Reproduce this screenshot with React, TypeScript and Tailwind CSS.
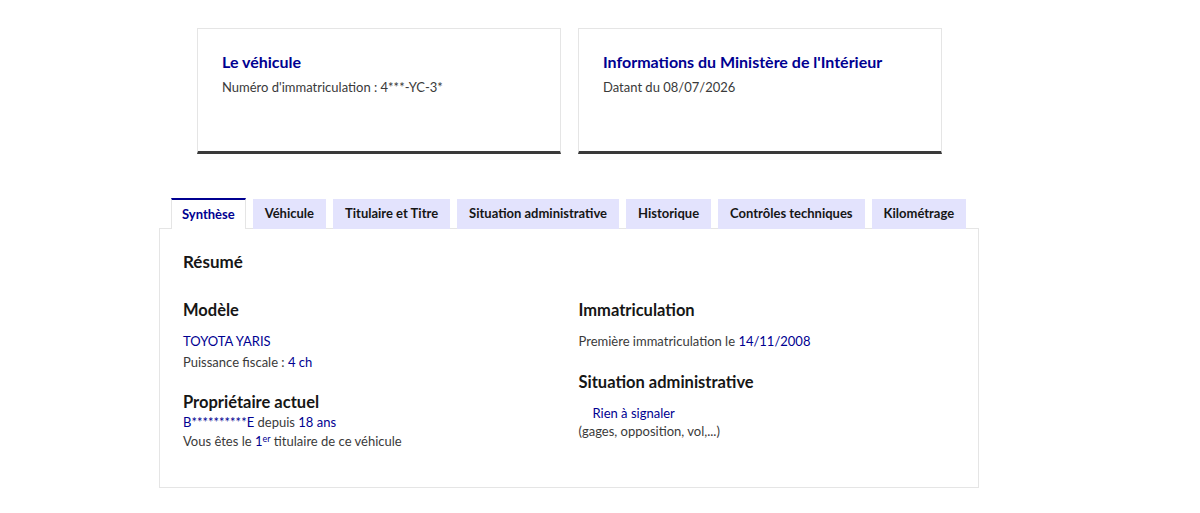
import React from "react";

const TABS = [
    "Synthèse",
    "Véhicule",
    "Titulaire et Titre",
    "Situation administrative",
    "Historique",
    "Contrôles techniques",
    "Kilométrage",
];

function InfoCard({ title, text }: { title: string; text: string }) {
    return (
        <div className="w-[364px] h-[126px] border border-[#e5e5e5] border-b-[3px] border-b-[#3a3a3a] px-6 pt-[21px]">
            <h2 className="text-[16px] leading-6 font-bold text-[#000091]">{title}</h2>
            <p className="mt-[3px] text-[13px] leading-5 text-[#3a3a3a]">{text}</p>
        </div>
    );
}

export default function App() {
    return (
        <div className="w-[1200px] h-[513px] bg-white font-['Lato',sans-serif] text-[#161616]">
            <div className="ml-[159px] w-[820px] pt-[28px]">
                <div className="flex gap-[17px] ml-[38px]">
                    <InfoCard title="Le véhicule" text="Numéro d'immatriculation : 4***-YC-3*" />
                    <InfoCard title="Informations du Ministère de l'Intérieur" text="Datant du 08/07/2026" />
                </div>

                <div className="mt-[44px] flex gap-[7px] pl-3 relative z-10">
                    {TABS.map((tab, i) =>
                        i === 0 ? (
                            <div
                                key={tab}
                                className="h-[31px] px-[10px] flex items-center bg-white border-t-2 border-t-[#000091] border-x border-x-[#e5e5e5] text-[13px] font-bold text-[#000091]"
                            >
                                {tab}
                            </div>
                        ) : (
                            <div
                                key={tab}
                                className="h-[30px] mt-[1px] px-3 flex items-center bg-[#e3e3fd] text-[13px] font-bold text-[#161616]"
                            >
                                {tab}
                            </div>
                        )
                    )}
                </div>

                <div className="h-[260px] -mt-[1px] border border-[#e5e5e5] pl-[23px] pr-6 pt-[21px]">
                    <h3 className="text-[17px] leading-6 font-bold">Résumé</h3>
                    <div className="mt-[24px] grid grid-cols-2 gap-5">
                        <div>
                            <h4 className="text-[16.5px] leading-6 font-bold">Modèle</h4>
                            <p className="mt-[9px] text-[13px] leading-5 text-[#000091]">TOYOTA YARIS</p>
                            <p className="mt-[1px] text-[13px] leading-5 text-[#3a3a3a]">
                                Puissance fiscale : <span className="text-[#000091]">4 ch</span>
                            </p>
                            <h4 className="mt-[18px] text-[16.5px] leading-6 font-bold">Propriétaire actuel</h4>
                            <p className="-mt-[1px] text-[13px] leading-[18px] text-[#000091]">
                                B**********E <span className="text-[#3a3a3a]">depuis</span> 18 ans
                            </p>
                            <p className="text-[13px] leading-5 text-[#3a3a3a]">
                                Vous êtes le <span className="text-[#000091]">1<sup className="text-[9px]">er</sup></span> titulaire de ce véhicule
                            </p>
                        </div>
                        <div>
                            <h4 className="text-[16.5px] leading-6 font-bold">Immatriculation</h4>
                            <p className="mt-[9px] text-[13px] leading-5 text-[#3a3a3a]">
                                Première immatriculation le <span className="text-[#000091]">14/11/2008</span>
                            </p>
                            <h4 className="mt-[19px] text-[16.5px] leading-6 font-bold">Situation administrative</h4>
                            <p className="mt-[9px] pl-[14px] text-[13px] leading-5 text-[#000091]">Rien à signaler</p>
                            <p className="-mt-[1px] text-[13px] leading-[18px] text-[#3a3a3a]">(gages, opposition, vol,...)</p>
                        </div>
                    </div>
                </div>
            </div>
        </div>
    );
}
